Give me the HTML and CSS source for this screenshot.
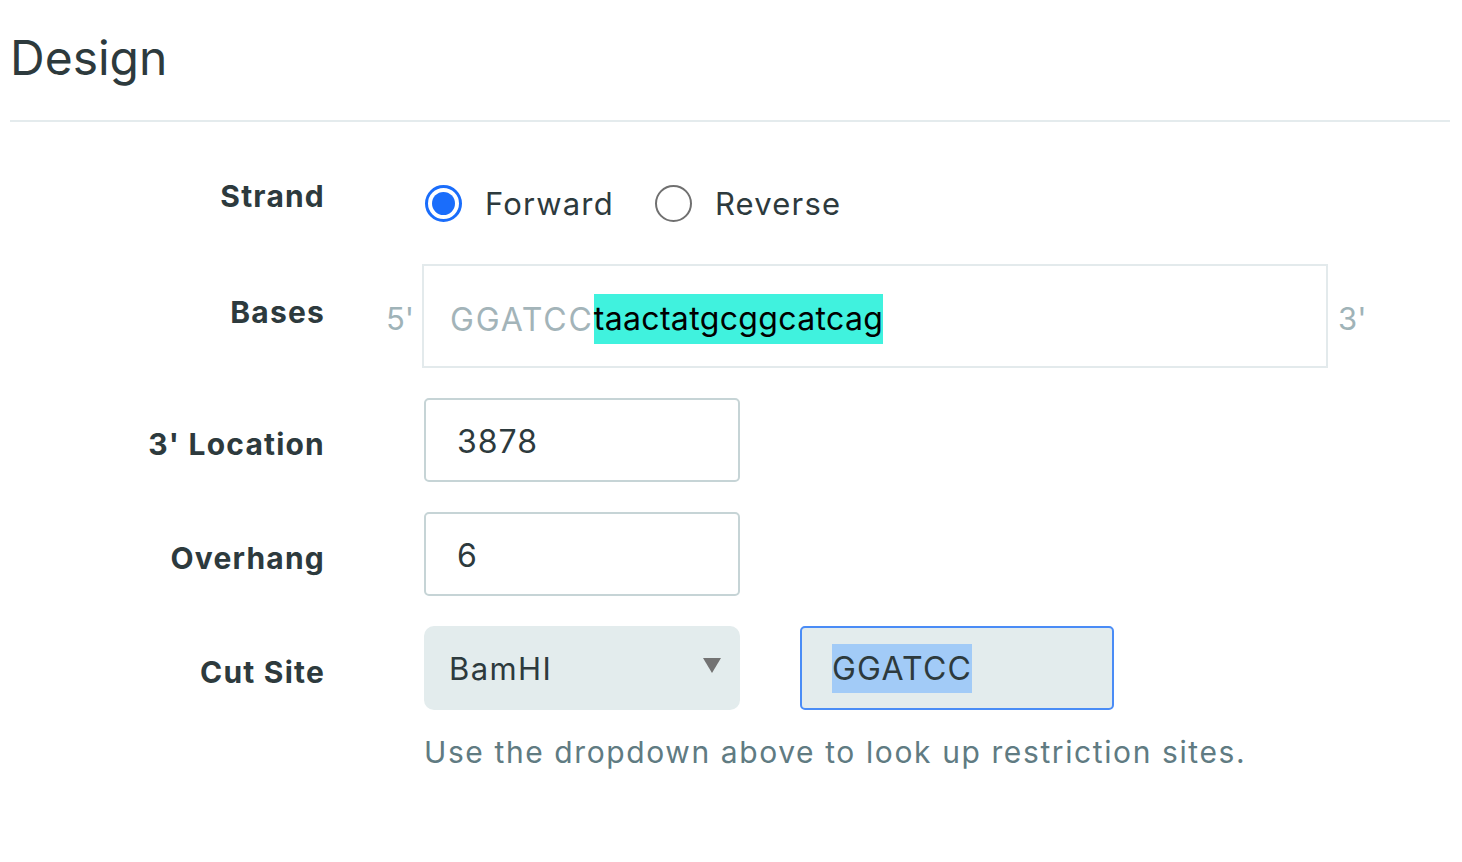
FILE: index.html
```html
<!DOCTYPE html>
<html>
<head>
<meta charset="utf-8">
<link rel="stylesheet" href="styles.css">
</head>
<body>
<div class="page">
  <h1 class="title">Design</h1>
  <div class="divider"></div>
  <div class="form">
    <div class="row row-strand">
      <div class="label">Strand</div>
      <div class="radios">
        <div class="radio"><span class="dot checked"></span><span>Forward</span></div>
        <div class="radio"><span class="dot"></span><span>Reverse</span></div>
      </div>
    </div>
    <div class="row row-bases">
      <div class="label">Bases</div>
      <div class="bases">
        <span class="end">5'</span>
        <div class="seq-box"><span class="seq-prefix">GGATCC</span><span class="seq-hl">taactatgcggcatcag</span></div>
        <span class="end">3'</span>
      </div>
    </div>
    <div class="row">
      <div class="label">3' Location</div>
      <div class="input">3878</div>
    </div>
    <div class="row">
      <div class="label">Overhang</div>
      <div class="input">6</div>
    </div>
    <div class="row row-cut">
      <div class="label">Cut Site</div>
      <div class="cut">
        <div class="cut-controls">
          <div class="select"><span>BamHI</span><span class="arrow"></span></div>
          <div class="site-input"><span class="sel">GGATCC</span></div>
        </div>
        <div class="help">Use the dropdown above to look up restriction sites.</div>
      </div>
    </div>
  </div>
</div>
</body>
</html>
```

FILE: styles.css
```css
* { box-sizing: border-box; }
html, body { margin: 0; padding: 0; background: #fff; }
body {
  font-family: "Inter", "Lato", sans-serif;
  color: #2d3a3d;
}
.page { padding: 0 12px 0 10px; }
.title {
  margin: 0;
  padding-top: 28px;
  height: 120px;
  font-size: 48px;
  font-weight: 400;
  color: #2d3a3d;
  line-height: 60px;
}
.divider {
  height: 2px;
  background: #e4ebed;
}
.form {
  padding-top: 61px;
}
.row {
  display: grid;
  grid-template-columns: 314px 1fr;
  column-gap: 100px;
  align-items: center;
  margin-bottom: 30px;
}
.row-strand { margin-bottom: 41px; }
.label {
  text-align: right;
  font-weight: 700;
  font-size: 30px;
  letter-spacing: 1.2px;
  margin-right: -1px;
  color: #2d3a3d;
  position: relative;
  top: 4px;
}
.row-strand .label { top: -7px; }
.row-bases .label { top: -4px; }
.row-cut .label { align-self: start; margin-top: 24px; }
.radios {
  display: flex;
  align-items: center;
  gap: 40px;
  height: 40px;
}
.radio {
  display: flex;
  align-items: center;
  gap: 23px;
  font-size: 31px;
  letter-spacing: 1.2px;
  color: #2d3a3d;
  padding-left: 1px;
}
.dot {
  width: 37px;
  height: 37px;
  border-radius: 50%;
  border: 2px solid #707070;
  display: inline-block;
  position: relative;
}
.dot.checked {
  border: 3px solid #1a6dfb;
}
.dot.checked::after {
  content: "";
  position: absolute;
  left: 4px; top: 4px; right: 4px; bottom: 4px;
  border-radius: 50%;
  background: #1a6dfb;
}
.bases {
  display: flex;
  align-items: center;
  margin-left: -38px;
  gap: 10px;
}
.end {
  font-size: 31px;
  color: #9fb3b8;
  width: 26px;
  position: relative;
  top: 2px;
}
.seq-box {
  width: 906px;
  height: 104px;
  border: 2px solid #e3eaec;
  display: flex;
  align-items: center;
  padding-left: 26px;
  font-size: 32px;
  padding-top: 6px;
}
.seq-prefix { color: #a3b4b9; letter-spacing: 1.8px; }
.seq-hl {
  background: #40f2de;
  color: #000;
  line-height: 50px;
  letter-spacing: 0.35px;
}
.input {
  width: 316px;
  height: 84px;
  border: 2px solid #c6d4d6;
  border-radius: 5px;
  display: flex;
  align-items: center;
  padding-left: 31px;
  font-size: 32px;
  letter-spacing: 1px;
  color: #2d3a3d;
  padding-top: 3px;
}
.cut { display: flex; flex-direction: column; }
.cut-controls {
  display: flex;
  gap: 60px;
}
.select {
  width: 316px;
  height: 84px;
  background: #e3eced;
  border-radius: 10px;
  display: flex;
  align-items: center;
  justify-content: space-between;
  padding: 0 19px 0 25px;
  font-size: 31px;
  letter-spacing: 1.4px;
  color: #2d3a3d;
}
.arrow {
  width: 0; height: 0;
  border-left: 9px solid transparent;
  border-right: 9px solid transparent;
  border-top: 15px solid #737373;
  margin-top: -6px;
}
.site-input {
  width: 314px;
  height: 84px;
  background: #e3eced;
  border: 2px solid #4a8cf6;
  border-radius: 5px;
  display: flex;
  align-items: center;
  padding-left: 30px;
  font-size: 32px;
  letter-spacing: 1.2px;
  color: #2d3a3d;
}
.sel {
  background: #a2cbf7;
  line-height: 49px;
}
.help {
  margin-top: 24px;
  font-size: 30px;
  letter-spacing: 1.6px;
  color: #607b82;
}
```
